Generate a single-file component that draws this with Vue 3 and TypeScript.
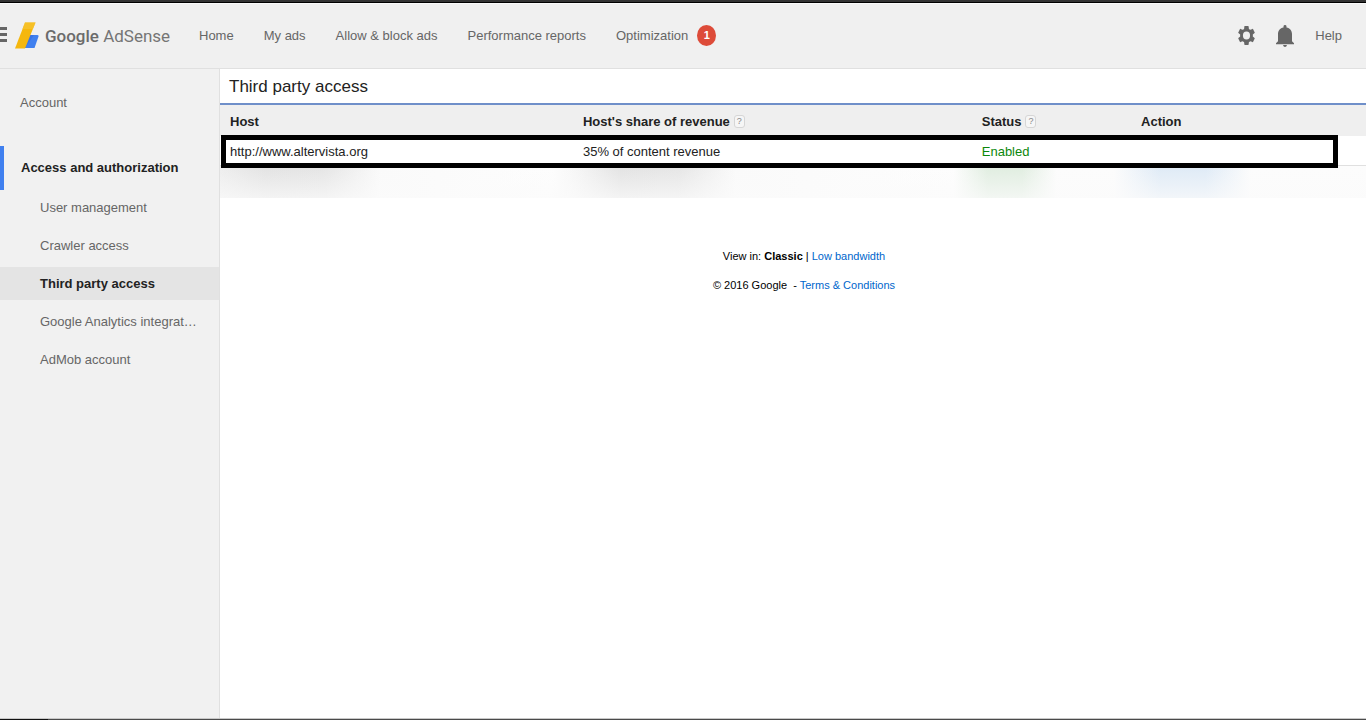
<script setup lang="ts">
interface NavItem {
  label: string
  badge?: number
}

interface SideItem {
  label: string
  active?: boolean
}

const navItems: NavItem[] = [
  { label: 'Home' },
  { label: 'My ads' },
  { label: 'Allow & block ads' },
  { label: 'Performance reports' },
  { label: 'Optimization', badge: 1 },
]

const sideItems: SideItem[] = [
  { label: 'User management' },
  { label: 'Crawler access' },
  { label: 'Third party access', active: true },
  { label: 'Google Analytics integrat…' },
  { label: 'AdMob account' },
]
</script>

<template>
  <div class="page">
    <div class="top-edge"></div>
    <header class="topbar">
      <button class="menu" type="button" aria-label="Menu">
        <svg width="7" height="18" viewBox="0 0 7 18">
          <path d="M0 0h7v3H0zM0 6h7v3H0zM0 12h7v3H0z" fill="#666" />
        </svg>
      </button>
      <a class="brand" href="#">
        <svg width="24" height="27" viewBox="0 0 24 27" aria-hidden="true">
          <path d="M14 13h8.500q1.500 0 1 1.500L19.500 26H9z" fill="#4080ef" />
          <path d="M14 13l5 0L10 26H9z" fill="#3367d6" opacity=".45" />
          <path d="M10 0.500h10.500L10 26.500H0z" fill="#f5b70e" />
          <path d="M10 0.500h10.500L18 7H7.500z" fill="#f7c331" opacity=".7" />
        </svg>
        <span class="brand-name"><span class="brand-strong">Google</span> AdSense</span>
      </a>
      <nav class="nav">
        <a v-for="item in navItems" :key="item.label" href="#">
          {{ item.label }}
          <span v-if="item.badge" class="badge">{{ item.badge }}</span>
        </a>
      </nav>
      <div class="tools">
        <button type="button" aria-label="Settings">
          <svg width="17" height="19" viewBox="2 2 20 20" preserveAspectRatio="none">
            <path fill="#666" fill-rule="evenodd" d="M19.430 12.980c.04-.32.07-.64.07-.98s-.03-.66-.07-.98l2.110-1.650c.19-.15.24-.42.12-.64l-2-3.460c-.12-.22-.39-.3-.61-.22l-2.490 1c-.52-.4-1.080-.73-1.690-.98l-.38-2.650A.49.49 0 0 0 14 2h-4c-.25 0-.46.18-.49.42l-.38 2.650c-.61.25-1.170.59-1.690.98l-2.490-1c-.23-.09-.49 0-.61.22l-2 3.460c-.13.22-.07.49.12.64l2.110 1.650c-.04.32-.07.65-.07.98s.03.66.07.98l-2.110 1.650c-.19.15-.24.42-.12.64l2 3.460c.12.22.39.3.61.22l2.490-1c.52.4 1.080.73 1.690.98l.38 2.650c.03.24.24.42.49.42h4c.25 0 .46-.18.49-.42l.38-2.650c.61-.25 1.170-.59 1.690-.98l2.490 1c.23.09.49 0 .61-.22l2-3.460c.12-.22.07-.49-.12-.64l-2.110-1.650zM12 16.200a4.200 4.200 0 1 1 0-8.400 4.200 4.200 0 0 1 0 8.400z" />
          </svg>
        </button>
        <button type="button" aria-label="Notifications">
          <svg width="18" height="22" viewBox="0 0 18 23" preserveAspectRatio="none">
            <path fill="#666" d="M7.500 2.500V1.500a1.500 1.500 0 0 1 3 0v1C14 3.200 16 6 16 9.500V17l2 2v1H0v-1l2-2V9.500C2 6 4 3.200 7.500 2.500zM7 21h4q-.5 2-2 2t-2-2z" />
          </svg>
        </button>
        <a href="#">Help</a>
      </div>
    </header>

    <div class="body">
      <aside class="sidebar">
        <a class="account" href="#">Account</a>
        <a class="section" href="#">Access and authorization</a>
        <ul>
          <li v-for="item in sideItems" :key="item.label">
            <a href="#" :class="{ active: item.active }">{{ item.label }}</a>
          </li>
        </ul>
      </aside>

      <main class="content">
        <h1>Third party access</h1>
        <div class="table-wrap">
          <table>
            <colgroup>
              <col class="col-host" />
              <col class="col-share" />
              <col class="col-status" />
              <col />
            </colgroup>
            <thead>
              <tr>
                <th>Host</th>
                <th>
                  <div class="heading">Host's share of revenue<button class="hint" type="button">?</button></div>
                </th>
                <th>
                  <div class="heading">Status<button class="hint" type="button">?</button></div>
                </th>
                <th>Action</th>
              </tr>
            </thead>
            <tbody>
              <tr>
                <td>http://www.altervista.org</td>
                <td>35% of content revenue</td>
                <td class="enabled">Enabled</td>
                <td></td>
              </tr>
            </tbody>
          </table>
          <div class="highlight"></div>
        </div>
        <div class="obscured"></div>
        <footer>
          <p>View in: <b>Classic</b> | <a href="#">Low bandwidth</a></p>
          <p>© 2016 Google &nbsp;- <a href="#">Terms &amp; Conditions</a></p>
        </footer>
      </main>
    </div>
    <div class="bottom-edge"></div>
  </div>
</template>

<style>
body {
  margin: 0;
}
</style>

<style scoped>
* {
  box-sizing: border-box;
}

.page {
  display: flex;
  flex-direction: column;
  min-height: 100vh;
  background: #fff;
  color: #222;
  font-family: "Liberation Sans", Arial, sans-serif;
  font-size: 13px;
  line-height: 18px;
}

a {
  color: inherit;
  text-decoration: none;
}

button {
  display: flex;
  padding: 0;
  border: 0;
  background: none;
  font-family: inherit;
}

.top-edge {
  height: 3px;
  border-bottom: 1px solid #000;
  background: #333;
}

.topbar {
  display: flex;
  align-items: center;
  height: 66px;
  border-bottom: 1px solid #e0e0e0;
  background: #f0f0f0;
  color: #666;
  box-shadow: inset 0 1px #fafafa;
}

.menu {
  margin-right: 8px;
}

.brand {
  display: flex;
  align-items: center;
  width: 184px;
  gap: 6px;
}

.brand-name {
  font-family: Roboto, "Open Sans", sans-serif;
  font-size: 17px;
  line-height: 24px;
  color: #757575;
  white-space: nowrap;
}

.brand-strong {
  color: #6b6b6b;
  font-weight: 500;
}

.nav {
  display: flex;
  gap: 30px;
}

.nav a {
  display: flex;
  align-items: center;
  gap: 9px;
  white-space: nowrap;
}

.badge {
  width: 19px;
  height: 21px;
  border-radius: 50%;
  background: #dd4b39;
  color: #fff;
  font-size: 11px;
  font-weight: bold;
  line-height: 21px;
  text-align: center;
}

.tools {
  display: flex;
  align-items: center;
  gap: 21px;
  margin-left: auto;
  padding-right: 24px;
}

.body {
  display: flex;
  flex: 1;
}

.sidebar {
  width: 220px;
  flex-shrink: 0;
  padding-top: 24px;
  border-right: 1px solid #e0e0e0;
  background: #f1f1f1;
  color: #666;
}

.sidebar a {
  display: block;
  white-space: nowrap;
}

.sidebar .account {
  padding-left: 20px;
  line-height: 20px;
}

.sidebar .section {
  margin-top: 33px;
  padding-left: 17px;
  border-left: 4px solid #4080ef;
  color: #222;
  font-weight: bold;
  line-height: 44px;
}

ul {
  display: grid;
  gap: 5px;
  margin: 1px 0 0;
  padding: 0;
  list-style: none;
}

.sidebar li a {
  padding-left: 40px;
  line-height: 33px;
}

.sidebar li .active {
  background: #e4e4e4;
  color: #222;
  font-weight: bold;
}

.content {
  flex: 1;
  min-width: 0;
}

h1 {
  margin: 0;
  padding-top: 2px;
  padding-left: 9px;
  border-bottom: 2px solid #6f8fc9;
  font-size: 17px;
  font-weight: normal;
  line-height: 32px;
}

.table-wrap {
  position: relative;
}

table {
  width: 100%;
  border-spacing: 0;
  table-layout: fixed;
}

.col-host {
  width: 30.8%;
}

.col-share {
  width: 34.8%;
}

.col-status {
  width: 13.9%;
}

th,
td {
  height: 31px;
  padding: 2px 0 0 10px;
  text-align: left;
  white-space: nowrap;
}

th {
  background: #efefef;
}

td {
  height: 30px;
  border-bottom: 1px solid #e0e0e0;
}

.enabled {
  color: #0b870b;
}

.heading {
  display: flex;
  align-items: center;
  gap: 4px;
}

.hint {
  display: block;
  width: 11px;
  height: 13px;
  border: 1px solid #d6d6d6;
  border-radius: 3px;
  background: #f6f6f6;
  color: #888;
  font-size: 9px;
  line-height: 11px;
  text-align: center;
}

.highlight {
  position: absolute;
  top: 30px;
  right: 28px;
  bottom: -2px;
  left: 1px;
  border: 5px solid #000;
  pointer-events: none;
}

.obscured {
  height: 32px;
  background:
    linear-gradient(to bottom, transparent, rgba(251, 251, 251, 0.7)),
    linear-gradient(
      to right,
      #ededed 0%,
      #e2e2e2 4%,
      #e4e4e4 9%,
      #fafafa 14%,
      #fdfdfd 29%,
      #f6f6f6 31%,
      #e2e2e2 35%,
      #e5e5e5 40%,
      #fafafa 45%,
      #fdfdfd 64%,
      #e0ede0 67%,
      #e0ede0 70%,
      #fcfcfc 73%,
      #fcfcfc 78%,
      #deeaf6 82%,
      #deeaf6 86%,
      #fcfcfc 90%,
      #fcfcfc 100%
    );
}

footer {
  padding-top: 49px;
  padding-left: 22px;
  color: #000;
  font-size: 11px;
  text-align: center;
}

footer p {
  margin: 0 0 11px;
}

footer a {
  color: #0066cc;
}

.bottom-edge {
  height: 2px;
  border-top: 1px solid #c8c8c8;
  background: linear-gradient(to right, #111 48px, #4a4a4a 48px);
}
</style>
